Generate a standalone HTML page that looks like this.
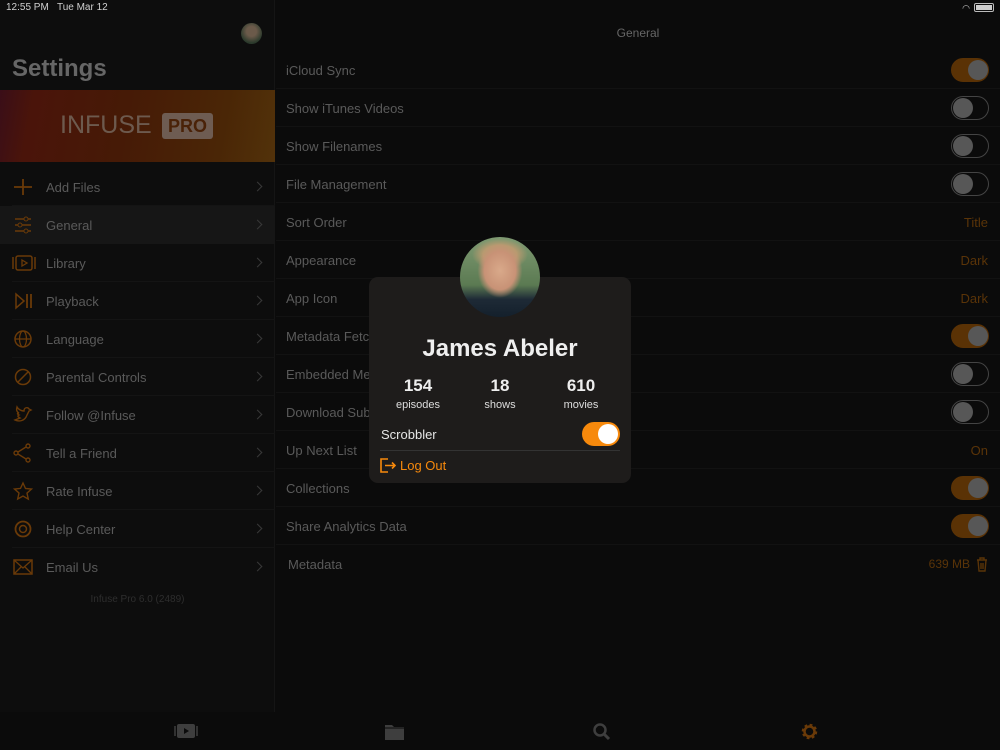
<!DOCTYPE html>
<html><head><style>
*{margin:0;padding:0;box-sizing:border-box}
body{width:1000px;height:750px;background:#0b0b0b;font-family:"Liberation Sans",sans-serif;position:relative;overflow:hidden;color:#666}
.abs{position:absolute}
.side{left:0;top:0;width:275px;height:712px;background:#0d0d0d;border-right:1px solid #151515}
.row{position:absolute;left:0;width:275px;height:38px}
.row .t{position:absolute;left:46px;top:12px;font-size:13px;color:#5a5a5a}
.row .ch{position:absolute;left:254px;top:15px;width:7px;height:7px;border-right:1.5px solid #383838;border-top:1.5px solid #383838;transform:rotate(45deg)}
.row .sep{position:absolute;left:12px;right:0;bottom:0;height:1px;background:#141414}
.row svg{position:absolute;left:12px;top:9px}
.r{position:absolute;left:276px;width:724px;height:38px;border-bottom:1px solid #121212}
.r .t{position:absolute;left:10px;top:12px;font-size:13px;color:#5a5a5a}
.r .v{position:absolute;right:12px;top:12px;font-size:13px;color:#5a3408}
.tg{position:absolute;right:11px;top:7px;width:38px;height:24px;border-radius:12px;border:1.5px solid #444}
.tg::after{content:"";position:absolute;top:0.5px;left:0.5px;width:20px;height:20px;border-radius:50%;background:#575757}
.tg.on{background:#5a3205;border-color:#5a3205}
.tg.on::after{left:auto;right:0.5px}
</style></head><body>
<div class="abs side"></div>
<div class="abs" style="left:6px;top:2px;font-size:10px;color:#d0d0d0;z-index:5">12:55 PM&nbsp;&nbsp; Tue Mar 12</div>
<div class="abs" style="right:6px;top:3px;width:20px;height:9px;border:1px solid #bbb;border-radius:2px;padding:1px"><div style="width:100%;height:100%;background:#ccc"></div></div>
<div class="abs" style="right:30px;top:3px;font-size:9px;color:#ccc">◠</div>
<div class="abs" style="left:241px;top:23px;width:21px;height:21px;border-radius:50%;background:radial-gradient(circle at 50% 40%,#6b5a4a 30%,#2b3a2c 70%)"></div>
<div class="abs" style="left:12px;top:55px;font-size:24px;font-weight:bold;color:#666">Settings</div>
<div class="abs" style="left:0;top:90px;width:275px;height:72px;background:linear-gradient(100deg,#3a0e18 0%,#4a140a 12%,#461a06 45%,#4a2606 80%,#52320a 100%)"></div>
<div class="abs" style="left:60px;top:111px;font-size:25px;color:#6d5a4e">INFUSE</div>
<div class="abs" style="left:162px;top:113px;width:51px;height:26px;background:#6e5c52;border-radius:3px;font-size:18px;font-weight:bold;color:#4a2208;text-align:center;line-height:26px">PRO</div>
<div class="abs" style="left:0;top:206px;width:275px;height:38px;background:#161616"></div>

<div class="row" style="top:168px"><svg width="22" height="20"><path d="M11 2v16M2 10h18" stroke="#6a3a08" stroke-width="1.8"/></svg><span class="t">Add Files</span><span class="ch"></span><span class="sep"></span></div>
<div class="row" style="top:206px"><svg width="22" height="20"><path d="M3 4h16M3 10h16M3 16h16" stroke="#6a3a08" stroke-width="1.5"/><circle cx="14" cy="4" r="2" fill="#161616" stroke="#6a3a08"/><circle cx="8" cy="10" r="2" fill="#161616" stroke="#6a3a08"/><circle cx="14" cy="16" r="2" fill="#161616" stroke="#6a3a08"/></svg><span class="t">General</span><span class="ch"></span></div>
<div class="row" style="top:244px"><svg width="24" height="20"><path d="M1 4v12M23 4v12" stroke="#6a3a08" stroke-width="1.5"/><rect x="4" y="3" width="16" height="14" rx="2" fill="none" stroke="#6a3a08" stroke-width="1.5"/><path d="M10 7l5 3-5 3z" fill="none" stroke="#6a3a08" stroke-width="1.3"/></svg><span class="t">Library</span><span class="ch"></span><span class="sep"></span></div>
<div class="row" style="top:282px"><svg width="22" height="20"><path d="M4 3v14l8-7z" fill="none" stroke="#6a3a08" stroke-width="1.5"/><path d="M15 3v14M19 3v14" stroke="#6a3a08" stroke-width="1.8"/></svg><span class="t">Playback</span><span class="ch"></span><span class="sep"></span></div>
<div class="row" style="top:320px"><svg width="22" height="20"><circle cx="11" cy="10" r="8" fill="none" stroke="#6a3a08" stroke-width="1.5"/><ellipse cx="11" cy="10" rx="3.5" ry="8" fill="none" stroke="#6a3a08" stroke-width="1.3"/><path d="M3 10h16" stroke="#6a3a08" stroke-width="1.3"/></svg><span class="t">Language</span><span class="ch"></span><span class="sep"></span></div>
<div class="row" style="top:358px"><svg width="22" height="20"><circle cx="11" cy="10" r="7.5" fill="none" stroke="#6a3a08" stroke-width="1.5"/><path d="M6 15l10-10" stroke="#6a3a08" stroke-width="1.5"/></svg><span class="t">Parental Controls</span><span class="ch"></span><span class="sep"></span></div>
<div class="row" style="top:396px"><svg width="22" height="20"><path d="M3 15c4 2 10 1 12-5l2-4 2-1-2-1c-1-2-5-2-5 2-3 0-6-2-7-4-1 3 0 5 2 6-2 0-2 1 0 2-2 1-1 2 1 3z" fill="none" stroke="#6a3a08" stroke-width="1.4"/></svg><span class="t">Follow @Infuse</span><span class="ch"></span><span class="sep"></span></div>
<div class="row" style="top:434px"><svg width="22" height="20"><circle cx="16" cy="3" r="2" fill="none" stroke="#6a3a08" stroke-width="1.4"/><circle cx="4" cy="10" r="2" fill="none" stroke="#6a3a08" stroke-width="1.4"/><circle cx="16" cy="17" r="2" fill="none" stroke="#6a3a08" stroke-width="1.4"/><path d="M6 9l8-5M6 11l8 5" stroke="#6a3a08" stroke-width="1.4"/></svg><span class="t">Tell a Friend</span><span class="ch"></span><span class="sep"></span></div>
<div class="row" style="top:472px"><svg width="22" height="20"><path d="M11 2l2.5 5.5 6 .6-4.5 4 1.3 6L11 15l-5.3 3 1.3-6-4.5-4 6-.6z" fill="none" stroke="#6a3a08" stroke-width="1.4"/></svg><span class="t">Rate Infuse</span><span class="ch"></span><span class="sep"></span></div>
<div class="row" style="top:510px"><svg width="22" height="20"><circle cx="11" cy="10" r="7.5" fill="none" stroke="#6a3a08" stroke-width="1.8"/><circle cx="11" cy="10" r="3.5" fill="none" stroke="#6a3a08" stroke-width="1.5"/></svg><span class="t">Help Center</span><span class="ch"></span><span class="sep"></span></div>
<div class="row" style="top:548px"><svg width="22" height="20"><rect x="2" y="3" width="18" height="14" fill="none" stroke="#6a3a08" stroke-width="1.5"/><path d="M2 3l9 8 9-8M2 17l7-7M20 17l-7-7" fill="none" stroke="#6a3a08" stroke-width="1.3"/></svg><span class="t">Email Us</span><span class="ch"></span></div>
<div class="abs" style="left:0;width:275px;top:594px;text-align:center;font-size:10px;color:#2e2e2e">Infuse Pro 6.0 (2489)</div>

<div class="abs" style="left:276px;width:724px;top:26px;text-align:center;font-size:12px;color:#666">General</div>
<div class="r" style="top:51px"><span class="t">iCloud Sync</span><span class="tg on"></span></div>
<div class="r" style="top:89px"><span class="t">Show iTunes Videos</span><span class="tg"></span></div>
<div class="r" style="top:127px"><span class="t">Show Filenames</span><span class="tg"></span></div>
<div class="r" style="top:165px"><span class="t">File Management</span><span class="tg"></span></div>
<div class="r" style="top:203px"><span class="t">Sort Order</span><span class="v">Title</span></div>
<div class="r" style="top:241px"><span class="t">Appearance</span><span class="v">Dark</span></div>
<div class="r" style="top:279px"><span class="t">App Icon</span><span class="v">Dark</span></div>
<div class="r" style="top:317px"><span class="t">Metadata Fetching</span><span class="tg on"></span></div>
<div class="r" style="top:355px"><span class="t">Embedded Metadata</span><span class="tg"></span></div>
<div class="r" style="top:393px"><span class="t">Download Subtitles</span><span class="tg"></span></div>
<div class="r" style="top:431px"><span class="t">Up Next List</span><span class="v">On</span></div>
<div class="r" style="top:469px"><span class="t">Collections</span><span class="tg on"></span></div>
<div class="r" style="top:507px"><span class="t">Share Analytics Data</span><span class="tg on"></span></div>
<div class="r" style="top:545px;border:none"><span class="t" style="left:12px">Metadata</span><span class="v" style="right:30px;font-size:12px">639 MB</span>
<svg class="abs" style="right:12px;top:12px" width="12" height="15"><path d="M1 3h10M4 3V1h4v2M2 3l1 11h6l1-11M5 6v6M7 6v6" fill="none" stroke="#5a3408" stroke-width="1.4"/></svg></div>

<div class="abs" style="left:0;top:712px;width:1000px;height:38px;background:#0b0b0b"></div>
<svg class="abs" style="left:174px;top:722px" width="24" height="18"><rect x="3" y="2" width="18" height="14" rx="2" fill="#3e3e3e"/><path d="M1 4v10M23 4v10" stroke="#3e3e3e" stroke-width="1.5"/><path d="M10 6l5 3-5 3z" fill="#0b0b0b"/></svg>
<svg class="abs" style="left:385px;top:723px" width="19" height="17"><path d="M0 2h7l2 2h10v13H0z" fill="#3e3e3e"/><path d="M0 5h19" stroke="#0b0b0b"/></svg>
<svg class="abs" style="left:593px;top:723px" width="18" height="18"><circle cx="7" cy="7" r="5.5" fill="none" stroke="#3e3e3e" stroke-width="2.5"/><path d="M11 11l5 5" stroke="#3e3e3e" stroke-width="3"/></svg>
<svg class="abs" style="left:800px;top:722px" width="19" height="19"><circle cx="9.5" cy="9.5" r="6" fill="none" stroke="#6a3a08" stroke-width="3.5" stroke-dasharray="2.5 2.2"/><circle cx="9.5" cy="9.5" r="5" fill="none" stroke="#6a3a08" stroke-width="2.5"/></svg>

<div class="abs" style="left:369px;top:277px;width:262px;height:206px;background:#1e1c1b;border-radius:9px"></div>
<div class="abs" style="left:460px;top:237px;width:80px;height:80px;border-radius:50%;background:radial-gradient(ellipse 28% 34% at 50% 42%,#d9a98a 0,#c89276 70%,transparent 100%),radial-gradient(ellipse 35% 20% at 50% 22%,#b89a70 60%,transparent 100%),linear-gradient(180deg,#7f9a72 0%,#5b7a52 60%,#1e2a36 78%,#14202c 100%)"></div>
<div class="abs" style="left:369px;width:262px;top:335px;text-align:center;font-size:24px;font-weight:bold;color:#efefef">James Abeler</div>
<div class="abs" style="left:388px;width:60px;top:376px;text-align:center;font-size:17px;font-weight:bold;color:#eee">154</div>
<div class="abs" style="left:388px;width:60px;top:399px;text-align:center;font-size:11px;color:#ddd">episodes</div>
<div class="abs" style="left:470px;width:60px;top:376px;text-align:center;font-size:17px;font-weight:bold;color:#eee">18</div>
<div class="abs" style="left:470px;width:60px;top:399px;text-align:center;font-size:11px;color:#ddd">shows</div>
<div class="abs" style="left:551px;width:60px;top:376px;text-align:center;font-size:17px;font-weight:bold;color:#eee">610</div>
<div class="abs" style="left:551px;width:60px;top:399px;text-align:center;font-size:11px;color:#ddd">movies</div>
<div class="abs" style="left:381px;top:427px;font-size:13px;color:#e6e6e6">Scrobbler</div>
<div class="abs" style="left:582px;top:422px;width:38px;height:24px;border-radius:12px;background:#f7890c"><div style="position:absolute;right:2px;top:2px;width:20px;height:20px;border-radius:50%;background:#fff"></div></div>
<div class="abs" style="left:380px;top:450px;width:240px;height:1px;background:#333"></div>
<svg class="abs" style="left:380px;top:458px" width="16" height="15"><path d="M8 1H1v13h7" fill="none" stroke="#f7890c" stroke-width="1.6"/><path d="M5 7.5h10M12 4.5l3 3-3 3" fill="none" stroke="#f7890c" stroke-width="1.6"/></svg>
<div class="abs" style="left:400px;top:458px;font-size:13px;color:#f7890c">Log Out</div>
</body></html>
